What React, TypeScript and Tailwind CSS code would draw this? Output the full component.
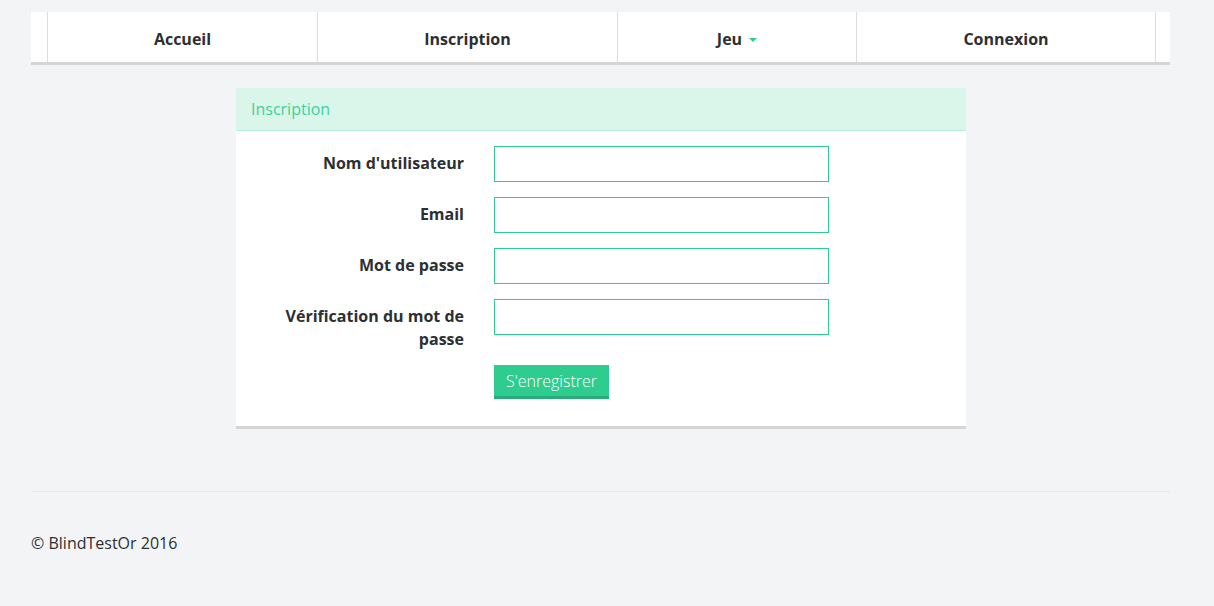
import React from 'react';

const fields = [
  { id: 'username', label: "Nom d'utilisateur", type: 'text' },
  { id: 'email', label: 'Email', type: 'email' },
  { id: 'password', label: 'Mot de passe', type: 'password' },
  { id: 'password2', label: 'Vérification du mot de passe', type: 'password' },
];

function NavBar() {
  return (
    <nav className="flex h-[53px] bg-white border-b-[3px] border-[#d5d5d5]">
      <div className="w-[16px]" />
      <a className="w-[270px] pt-[4px] flex items-center justify-center border-l border-[#dddddd] font-bold text-[16px] text-[#2c2f33]">
        Accueil
      </a>
      <a className="w-[300px] pt-[4px] flex items-center justify-center border-l border-[#dddddd] font-bold text-[16px] text-[#2c2f33]">
        Inscription
      </a>
      <a className="w-[239px] pt-[4px] flex items-center justify-center border-l border-[#dddddd] font-bold text-[16px] text-[#2c2f33]">
        Jeu
        <span className="ml-[7px] mt-[2px] w-0 h-0 border-x-[4px] border-t-[4px] border-x-transparent border-t-[#2ecc8f]" />
      </a>
      <a className="w-[300px] pt-[4px] flex items-center justify-center border-x border-[#dddddd] font-bold text-[16px] text-[#2c2f33]">
        Connexion
      </a>
      <div className="flex-1" />
    </nav>
  );
}

function RegisterPanel() {
  return (
    <div className="ml-[205px] mt-[23px] w-[730px] bg-white border-b-[3px] border-[#d5d5d5]">
      <div className="h-[43px] flex items-center px-[15px] bg-[#daf6eb] border-b border-[#b6eed9] text-[16px] text-[#3fd19b]">
        Inscription
      </div>
      <form className="pt-[15px] pb-[27px]">
        {fields.map((f) => (
          <div key={f.id} className="flex items-start mb-[15px]">
            <label
              htmlFor={f.id}
              className="w-[228px] pl-[15px] pt-[6px] text-right font-bold text-[16px] leading-[23px] text-[#2c2f33]"
            >
              {f.label}
            </label>
            <input
              id={f.id}
              type={f.type}
              className="ml-[30px] w-[335px] h-[36px] border border-[#2ecc8f] bg-white outline-none px-3"
            />
          </div>
        ))}
        <div className="pl-[258px] -mt-[1px]">
          <button
            type="button"
            className="w-[115px] h-[34px] bg-[#2ecc8f] border-b-[3px] border-[#27ad7a] text-white font-light text-[16px] leading-none"
          >
            S'enregistrer
          </button>
        </div>
      </form>
    </div>
  );
}

export default function App() {
  return (
    <div className="min-h-[606px] bg-[#f3f4f6] pt-[12px]" style={{ fontFamily: '"Open Sans", sans-serif' }}>
      <div className="ml-[31px] w-[1139px]">
        <NavBar />
        <RegisterPanel />
        <hr className="mt-[62px] border-t border-[#e6e8ea]" />
        <footer className="pt-[39px] text-[16px] text-[#2c2f33]">© BlindTestOr 2016</footer>
      </div>
    </div>
  );
}
